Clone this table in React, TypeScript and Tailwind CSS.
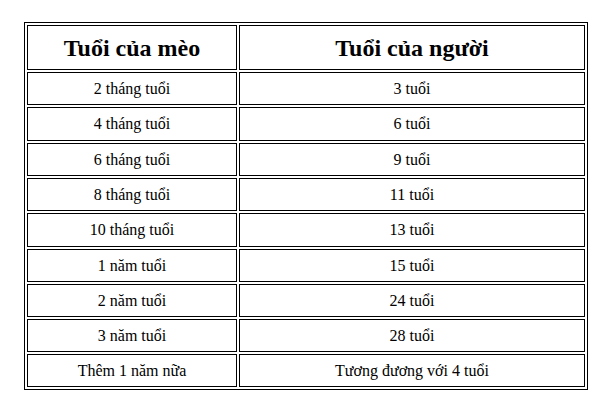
import * as React from 'react'

const rows = [
  ['2 tháng tuổi', '3 tuổi'],
  ['4 tháng tuổi', '6 tuổi'],
  ['6 tháng tuổi', '9 tuổi'],
  ['8 tháng tuổi', '11 tuổi'],
  ['10 tháng tuổi', '13 tuổi'],
  ['1 năm tuổi', '15 tuổi'],
  ['2 năm tuổi', '24 tuổi'],
  ['3 năm tuổi', '28 tuổi'],
  ['Thêm 1 năm nữa', 'Tương đương với 4 tuổi'],
]

export default function App() {
  return (
    <div className="min-h-[417px] w-[611px] bg-white pl-[24px] pt-[22px] font-['Liberation_Serif','Times_New_Roman',serif] text-black">
      <table className="w-[564px] table-fixed border-separate border-spacing-[2px] border border-black">
        <colgroup>
          <col className="w-[210px]" />
          <col className="w-[346px]" />
        </colgroup>
        <thead>
          <tr>
            <th className="h-[45px] border border-black p-0 text-center text-[24px] font-bold">Tuổi của mèo</th>
            <th className="h-[45px] border border-black p-0 text-center text-[24px] font-bold">Tuổi của người</th>
          </tr>
        </thead>
        <tbody>
          {rows.map(([cat, human], i) => (
            <tr key={i} className={i === 1 || i === 4 ? 'h-[34px]' : 'h-[33px]'}>
              <td className="border border-black p-0 text-center text-[16px]">{cat}</td>
              <td className="border border-black p-0 text-center text-[16px]">{human}</td>
            </tr>
          ))}
        </tbody>
      </table>
    </div>
  )
}
